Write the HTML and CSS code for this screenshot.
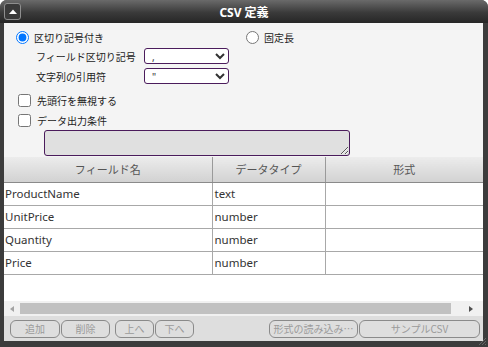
FILE: index.html
```html
<!DOCTYPE html>
<html lang="ja">
<head>
  <meta charset="UTF-8" />
  <title>CSV 定義</title>
  <link rel="stylesheet" href="styles.css">
</head>
<body>
  <div class="window">
    <div class="titlebar">
      <span class="collapse">
        <svg width="8" height="5" viewBox="0 0 8 5"><polygon points="0,5 4,0.5 8,5" fill="#fff"/></svg>
      </span>
      <span class="title">CSV 定義</span>
    </div>

    <div class="content">
      <div class="options">
        <div class="radio-row">
          <label class="choice sep"><input type="radio" name="mode" checked> 区切り記号付き</label>
          <label class="choice"><input type="radio" name="mode"> 固定長</label>
        </div>
        <div class="field-row">
          <span class="field-label">フィールド区切り記号</span>
          <select class="pick"><option>,</option></select>
        </div>
        <div class="field-row">
          <span class="field-label">文字列の引用符</span>
          <select class="pick"><option>"</option></select>
        </div>
        <div class="check-row first">
          <label class="choice"><input type="checkbox"> 先頭行を無視する</label>
        </div>
        <div class="check-row">
          <label class="choice"><input type="checkbox"> データ出力条件</label>
        </div>
        <div class="cond-row">
          <textarea class="cond"></textarea>
        </div>
      </div>

      <div class="grid">
        <table>
          <colgroup>
            <col class="c-name">
            <col class="c-type">
            <col>
          </colgroup>
          <thead>
            <tr>
              <th>フィールド名</th>
              <th>データタイプ</th>
              <th>形式</th>
            </tr>
          </thead>
          <tbody>
            <tr><td>ProductName</td><td>text</td><td></td></tr>
            <tr><td>UnitPrice</td><td>number</td><td></td></tr>
            <tr><td>Quantity</td><td>number</td><td></td></tr>
            <tr><td>Price</td><td>number</td><td></td></tr>
          </tbody>
        </table>
      </div>

      <div class="hscroll">
        <span class="arrow left"></span>
        <span class="thumb"></span>
        <span class="arrow right"></span>
      </div>

      <div class="toolbar">
        <button class="btn w50">追加</button>
        <button class="btn w49">削除</button>
        <button class="btn w39 gap">上へ</button>
        <button class="btn w39">下へ</button>
        <span class="spacer"></span>
        <button class="btn w89">形式の読み込み…</button>
        <button class="btn w121">サンプルCSV</button>
      </div>
    </div>

    <svg class="grip" width="9" height="9" viewBox="0 0 9 9">
      <path d="M8 1 L1 8 M8 4 L4 8 M8 7 L7 8" stroke="#666" stroke-width="1"/>
    </svg>
  </div>
</body>
</html>
```

FILE: styles.css
```css
* {
  box-sizing: border-box;
}

body {
  margin: 0;
  font-family: "Noto Sans", "Noto Sans CJK JP", sans-serif;
  background: #fff;
}

.window {
  position: relative;
  width: 488px;
  height: 347px;
  display: flex;
  flex-direction: column;
  background: #3c3c3c;
  border-radius: 7px 7px 0 0;
  overflow: hidden;
}

.titlebar {
  height: 23px;
  flex: none;
  display: flex;
  align-items: center;
  position: relative;
  background: linear-gradient(#6a6a6a, #3a3a3a 55%, #262626);
  color: #fff;
}

.collapse {
  width: 17px;
  height: 17px;
  margin-left: 4px;
  border: 1px solid #8e8e8e;
  border-radius: 3px;
  background: #3a3a3a;
  display: flex;
  align-items: center;
  justify-content: center;
}

.title {
  flex: 1;
  text-align: center;
  font-weight: bold;
  font-size: 12px;
  margin-right: 21px;
}

.content {
  flex: 1;
  display: flex;
  flex-direction: column;
  margin: 0 5px 6px 4px;
  background: #f4f4f4;
}

.options {
  padding-top: 5px;
  font-size: 10px;
  color: #222;
}

.choice {
  display: inline-flex;
  align-items: center;
  gap: 5px;
}

.choice input {
  margin: 0;
  width: 13px;
  height: 13px;
}

.radio-row {
  height: 18px;
  display: flex;
  align-items: center;
  padding-left: 12px;
}

.sep {
  width: 230px;
}

.field-row {
  height: 20px;
  display: flex;
  align-items: center;
  padding-left: 32px;
}

.field-label {
  width: 108px;
}

.pick {
  width: 85px;
  height: 16px;
  padding: 0 3px;
  font-family: "Noto Sans", sans-serif;
  font-size: 10px;
  color: #333;
  background: #fff;
  border: 1px solid #4b1c5c;
  border-radius: 3px;
}

.check-row {
  height: 20px;
  display: flex;
  align-items: center;
  padding-left: 14px;
}

.check-row.first {
  margin-top: 4px;
}

.check-row .choice {
  gap: 6px;
}

.cond-row {
  height: 27px;
  padding-left: 40px;
}

.cond {
  display: block;
  width: 306px;
  height: 26px;
  margin: 0;
  background: #e0e0e0;
  border: 1px solid #4b1c5c;
  border-radius: 3px;
  resize: both;
}

.grid {
  flex: 1;
  background: #fff;
  overflow: hidden;
}

table {
  width: 100%;
  border-collapse: collapse;
  table-layout: fixed;
}

.c-name {
  width: 208px;
}

.c-type {
  width: 113px;
}

th {
  height: 25px;
  font-weight: normal;
  font-size: 11px;
  color: #555;
  background: linear-gradient(#ececec, #d2d2d2);
  border-left: 1px solid #9a9a9a;
  border-bottom: 1px solid #8a8a8a;
}

td {
  height: 23px;
  padding: 0 2px;
  font-size: 11.5px;
  color: #333;
  border-left: 1px solid #a8a8a8;
  border-bottom: 1px solid #a8a8a8;
}

th:first-child,
td:first-child {
  border-left: none;
  padding-left: 1px;
}

.hscroll {
  height: 15px;
  flex: none;
  display: flex;
  align-items: center;
  background: #f1f1f1;
  padding: 0 10px 0 6px;
}

.thumb {
  height: 11px;
  flex: 1;
  margin: 0 18px 0 6px;
  background: #c1c1c1;
}

.arrow {
  width: 0;
  height: 0;
  border-top: 3.5px solid transparent;
  border-bottom: 3.5px solid transparent;
}

.arrow.left {
  border-right: 4px solid #a3a3a3;
}

.arrow.right {
  border-left: 4px solid #505050;
}

.toolbar {
  height: 25px;
  flex: none;
  display: flex;
  align-items: center;
  gap: 1px;
  padding: 0 3px 0 6px;
  background: #dedede;
}

.spacer {
  flex: 1;
}

.btn {
  height: 18px;
  padding: 0;
  font-family: "Noto Sans CJK JP", "Noto Sans", sans-serif;
  font-size: 10px;
  color: #9a9a9a;
  background: transparent;
  border: 1px solid #8a8a8a;
  border-radius: 6px;
}

.gap {
  margin-left: 4px;
}

.w50 { width: 50px; }
.w49 { width: 49px; }
.w39 { width: 39px; }
.w89 { width: 89px; }
.w121 { width: 121px; }

.grip {
  position: absolute;
  right: 1px;
  bottom: 1px;
}
```
